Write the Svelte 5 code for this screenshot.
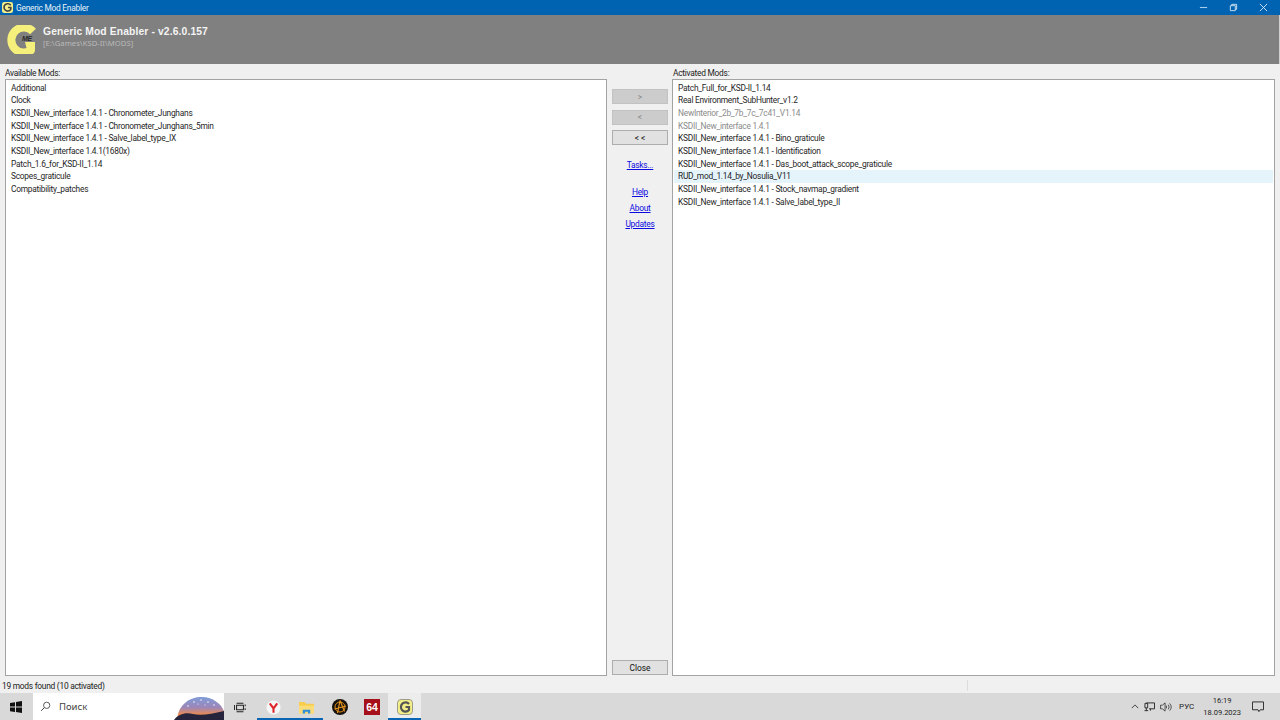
<script>
  const available = ['Additional','Clock','KSDII_New_interface 1.4.1 - Chronometer_Junghans','KSDII_New_interface 1.4.1 - Chronometer_Junghans_5min','KSDII_New_interface 1.4.1 - Salve_label_type_IX','KSDII_New_interface 1.4.1(1680x)','Patch_1.6_for_KSD-II_1.14','Scopes_graticule','Compatibility_patches'];
  const activated = [
    {t:'Patch_Full_for_KSD-II_1.14'},
    {t:'Real Environment_SubHunter_v1.2'},
    {t:'NewInterior_2b_7b_7c_7c41_V1.14',c:'dim'},
    {t:'KSDII_New_interface 1.4.1',c:'dim'},
    {t:'KSDII_New_interface 1.4.1 - Bino_graticule'},
    {t:'KSDII_New_interface 1.4.1 - Identification'},
    {t:'KSDII_New_interface 1.4.1 - Das_boot_attack_scope_graticule'},
    {t:'RUD_mod_1.14_by_Nosulia_V11',c:'sel'},
    {t:'KSDII_New_interface 1.4.1 - Stock_navmap_gradient'},
    {t:'KSDII_New_interface 1.4.1 - Salve_label_type_II'}
  ];
</script>

<div class="window">
  <div class="titlebar">
    <svg class="ticon" viewBox="0 0 12 12"><rect width="12" height="12" rx="2.500" fill="#f4f08a"/><path d="M9.500 3.600A4 4 0 1 0 9.600 8V6H6.500" fill="none" stroke="#444" stroke-width="1.800"/></svg>
    <span class="ttext">Generic Mod Enabler</span>
    <div class="wbtns">
      <svg viewBox="0 0 10 10" class="wb"><path d="M1 5h8" stroke="#a9cde9" stroke-width="1.200"/></svg>
      <svg viewBox="0 0 10 10" class="wb"><path d="M1.500 3h5.500v5.500h-5.500zM3 3V1.500h5.500V7H7" fill="none" stroke="#d5e6f4" stroke-width="1"/></svg>
      <svg viewBox="0 0 10 10" class="wb"><path d="M1 1l8 8M9 1l-8 8" stroke="#dcebf6" stroke-width="1"/></svg>
    </div>
  </div>

  <header class="banner">
    <svg class="logo" viewBox="0 0 30 29">
      <path d="M27 6.500A12.500 12.500 0 1 0 26 24.500" fill="none" stroke="#f5f07c" stroke-width="8"/>
      <path d="M19 17h10v9.500l-7 2.500z" fill="#f5f07c"/>
      <text x="16" y="16" class="me">ME</text>
    </svg>
    <div class="btext">
      <div class="bname">Generic Mod Enabler - v2.6.0.157</div>
      <div class="bpath">[E:\Games\KSD-II\MODS]</div>
    </div>
  </header>

  <main class="body">
    <section class="col">
      <div class="label">Available Mods:</div>
      <ul class="list">
        {#each available as m}<li>{m}</li>{/each}
      </ul>
    </section>

    <nav class="mid">
      <button class="btn off">&gt;</button>
      <button class="btn off">&lt;</button>
      <button class="btn">&lt; &lt;</button>
      <a class="lnk tasks" href="#t">Tasks...</a>
      <a class="lnk help" href="#h">Help</a>
      <a class="lnk" href="#a">About</a>
      <a class="lnk" href="#u">Updates</a>
      <button class="btn close">Close</button>
    </nav>

    <section class="col">
      <div class="label right">Activated Mods:</div>
      <ul class="list">
        {#each activated as m}<li class={m.c}>{m.t}</li>{/each}
      </ul>
    </section>
  </main>

  <div class="status"><span>19 mods found (10 activated)</span><i class="sep"></i></div>

  <footer class="taskbar">
    <div class="start">
      <svg viewBox="0 0 12 12" class="win"><path d="M0 2l5-.8V5.600H0zM6 1l6-1v5.600H6zM0 6.400h5V11l-5-.8zM6 6.400h6V12l-6-1z" fill="#111"/></svg>
    </div>
    <div class="search">
      <svg viewBox="0 0 14 14" class="mag"><circle cx="8.500" cy="5.500" r="4" fill="none" stroke="#333" stroke-width="1"/><path d="M5.500 8.500L1.500 12.500" stroke="#333" stroke-width="1.200"/></svg>
      <span>Поиск</span>
      <svg viewBox="0 0 50 24" class="art">
        <defs><linearGradient id="sky" x1="0" y1="0" x2="0" y2="1"><stop offset="0" stop-color="#7f9bd8"/><stop offset=".45" stop-color="#9c86b8"/><stop offset=".75" stop-color="#e88a55"/></linearGradient></defs>
        <path d="M3 24C4 9 15 1 28 1c11 0 19 7 22 14v9z" fill="url(#sky)"/>
        <path d="M0 24c4-6 12-8 19-6 8 2 18 0 31-3v9z" fill="#26243c"/>
        <g fill="#eef3fc"><circle cx="14" cy="10" r=".8"/><circle cx="20" cy="6" r=".8"/><circle cx="27" cy="4" r=".8"/><circle cx="34" cy="6" r=".8"/><circle cx="40" cy="9" r=".8"/><circle cx="24" cy="8" r=".6"/><circle cx="31" cy="9" r=".6"/></g>
      </svg>
    </div>
    <div class="tb-icons">
      <div class="tbi">
        <svg viewBox="0 0 14 12" class="tv"><path d="M3 1h8M3 11h8M3 3.500h8v5H3z" fill="none" stroke="#222" stroke-width="1.200"/><path d="M0.500 3v6M13 2.500v2M13 7v2" stroke="#222" stroke-width="1.200"/></svg>
      </div>
      <div class="tbi active">
        <svg viewBox="0 0 16 16" class="ic"><circle cx="8" cy="8" r="7.500" fill="#f6f6f6"/><path d="M4 3.500L8 9l4-5.500M8 9v4.500" fill="none" stroke="#e0252a" stroke-width="2.200"/></svg>
      </div>
      <div class="tbi active">
        <svg viewBox="0 0 16 14" class="ic"><path d="M0 1h6l1.500 2H16v10H0z" fill="#f7cd4b"/><rect x="0" y="5" width="16" height="8.500" fill="#fbdc7a"/><path d="M4 13.500V9.500h8v4h-2.500V11.500h-3v2z" fill="#2f8fd8"/></svg>
      </div>
      <div class="tbi">
        <svg viewBox="0 0 16 16" class="ic big"><circle cx="8" cy="8" r="8" fill="#17130f"/><circle cx="8" cy="8" r="5" fill="none" stroke="#e08a1c" stroke-width="1"/><path d="M8 1.500L5.500 14M8 1.500L12.500 12.500M2.500 10L14 7" stroke="#e8951f" stroke-width="1.200"/></svg>
      </div>
      <div class="tbi">
        <div class="six"><span>64</span></div>
      </div>
      <div class="tbi current">
        <svg viewBox="0 0 16 16" class="ic big"><rect x=".5" y=".5" width="15" height="15" rx="3.500" fill="#f3ee88" stroke="#9c9c8a"/><path d="M12 5A4.600 4.600 0 1 0 12 11V8H8.500" fill="none" stroke="#555" stroke-width="2.200"/></svg>
      </div>
    </div>
    <div class="tray">
      <svg viewBox="0 0 10 6" class="chev"><path d="M1 5l4-4 4 4" fill="none" stroke="#222"/></svg>
      <svg viewBox="0 0 12 11" class="net"><path d="M2.500 1h9v6.500h-6M1 1.500h3v5H1zM2.500 6.500v3M0.500 9.500h4M7 7.500v2" fill="none" stroke="#222"/></svg>
      <svg viewBox="0 0 13 11" class="vol"><path d="M.5 3.500h2L5.500 1v9L2.500 7.500h-2z" fill="none" stroke="#222" stroke-width=".8"/><path d="M7 4v3M9 3a4 4 0 0 1 0 5M10.500 1.500a6 6 0 0 1 0 8" fill="none" stroke="#222" stroke-width=".8"/></svg>
      <span class="lang">РУС</span>
      <div class="clock"><span>16:19</span><span>18.09.2023</span></div>
      <svg viewBox="0 0 13 13" class="note"><path d="M.5 1h12v8.500H9L7.500 11.500 6.500 9.500h-6z" fill="none" stroke="#222"/></svg>
    </div>
  </footer>
</div>

<style>
  :global(body) { margin: 0; background: #f0f0f0; }
  .window {
    width: 1280px; height: 720px; display: flex; flex-direction: column; overflow: hidden;
    font-family: Roboto, "Noto Sans", sans-serif; font-size: 8.400px; letter-spacing: -.26px; color: #1a1a1a;
  }
  .titlebar { height: 15px; background: #0063b1; display: flex; align-items: center; padding-left: 2px; color: #e8f1f8; flex: none; }
  .ticon { width: 11px; height: 11px; margin-right: 3px; }
  .ttext { font-size: 8.400px; }
  .wbtns { margin-left: auto; display: flex; gap: 21px; padding-right: 12px; }
  .wb { width: 9px; height: 9px; display: block; }

  .banner { height: 49px; box-sizing: border-box; background: #808080; display: flex; align-items: center; padding-left: 6px; border-right: 1px solid #d0d0d0; flex: none; }
  .logo { width: 30px; height: 29px; margin-right: 7px; }
  .me { font: italic 700 7px "Liberation Sans", sans-serif; fill: #2a2a2a; }
  .btext { display: flex; flex-direction: column; margin-top: -6px; }
  .bname { font-family: "Liberation Sans", sans-serif; font-weight: 700; font-size: 10.300px; letter-spacing: .13px; line-height: 13px; color: #f4f4f4; }
  .bpath { font-family: "Noto Sans", sans-serif; font-size: 7.700px; letter-spacing: 0; line-height: 10px; color: #b9b9b9; }

  .body { flex: 1; min-height: 0; display: grid; grid-template-columns: 602px 65px 603px; padding: 5px 5px 2px 5px; background: #f0f0f0; }
  .col { display: flex; flex-direction: column; min-height: 0; }
  .label { height: 10px; line-height: 9px; color: #222; }
  .label.right { padding-left: 1px; }
  .list { flex: 1; margin: 0; padding: 1.500px 1px 0; list-style: none; background: #fff; border: 1px solid #a3a3a3; }
  .list li { height: 12.680px; line-height: 12.680px; padding-left: 4px; white-space: nowrap; color: #1f1f1f; }
  .list li.dim { color: #8b8b8b; }
  .list li.sel { background: #e5f3fb; }

  .mid { display: flex; flex-direction: column; align-items: stretch; padding: 20px 4px 0 5px; }
  .btn { height: 15px; padding: 0; margin: 0 0 5.500px; background: #e1e1e1; border: 1px solid #adadad; font: inherit; line-height: 12px; color: #111; }
  .btn.off { background: #cccccc; border-color: #c2c2c2; color: #8a8a8a; }
  .lnk { text-align: center; color: #0b0be0; text-decoration: underline; line-height: 11px; margin-bottom: 5px; }
  .tasks { margin-top: 9px; margin-bottom: 16px; }
  .close { margin: auto 0 1px; }

  .status { height: 15px; flex: none; background: #f0f0f0; display: flex; align-items: center; padding-left: 2px; position: relative; color: #222; }
  .sep { position: absolute; left: 967px; top: 2px; bottom: 2px; width: 1px; background: #dcdcdc; }

  .taskbar { height: 27px; flex: none; background: #d9d9d9; display: flex; align-items: stretch; color: #222; }
  .start { width: 33px; display: flex; align-items: center; justify-content: center; }
  .win { width: 12px; height: 12px; margin-left: -1px; }
  .search { width: 191px; background: #fff; display: flex; align-items: center; position: relative; overflow: hidden; font-family: "Noto Sans", sans-serif; font-size: 9.500px; letter-spacing: 0; color: #444; }
  .mag { width: 11px; height: 11px; margin-left: 7px; margin-right: 8px; }
  .art { position: absolute; right: 0; bottom: 0; width: 50px; height: 24px; filter: blur(.4px); }
  .tb-icons { display: flex; }
  .tbi { width: 33px; display: flex; align-items: center; justify-content: center; box-sizing: border-box; padding-top: 1px; }
  .tbi.active { box-shadow: inset 0 -2px 0 #0a66b5; }
  .tbi.current { background: #ececec; box-shadow: inset 0 -2px 0 #0a66b5; margin-left: -1px; }
  .tv { width: 12px; height: 11px; margin-right: 2px; }
  .ic { width: 15px; height: 15px; }
  .ic.big { width: 16px; height: 16px; }
  .six { width: 16px; height: 16px; margin-right: 1px; background: #a5101a; display: flex; align-items: center; justify-content: center; color: #fff; font: 700 10.500px "Liberation Sans", sans-serif; letter-spacing: 0; }
  .tray { margin-left: auto; display: flex; align-items: center; padding-right: 16px; letter-spacing: 0; }
  .chev { width: 8px; height: 5px; margin-right: 5px; }
  .net { width: 11px; height: 10px; margin-right: 5px; }
  .vol { width: 12px; height: 10px; margin-right: 7px; }
  .lang { font-size: 8px; margin-right: 9px; }
  .clock { display: flex; flex-direction: column; align-items: center; font-size: 7.500px; line-height: 12px; margin-right: 11px; }
  .note { width: 12px; height: 12px; }
</style>
